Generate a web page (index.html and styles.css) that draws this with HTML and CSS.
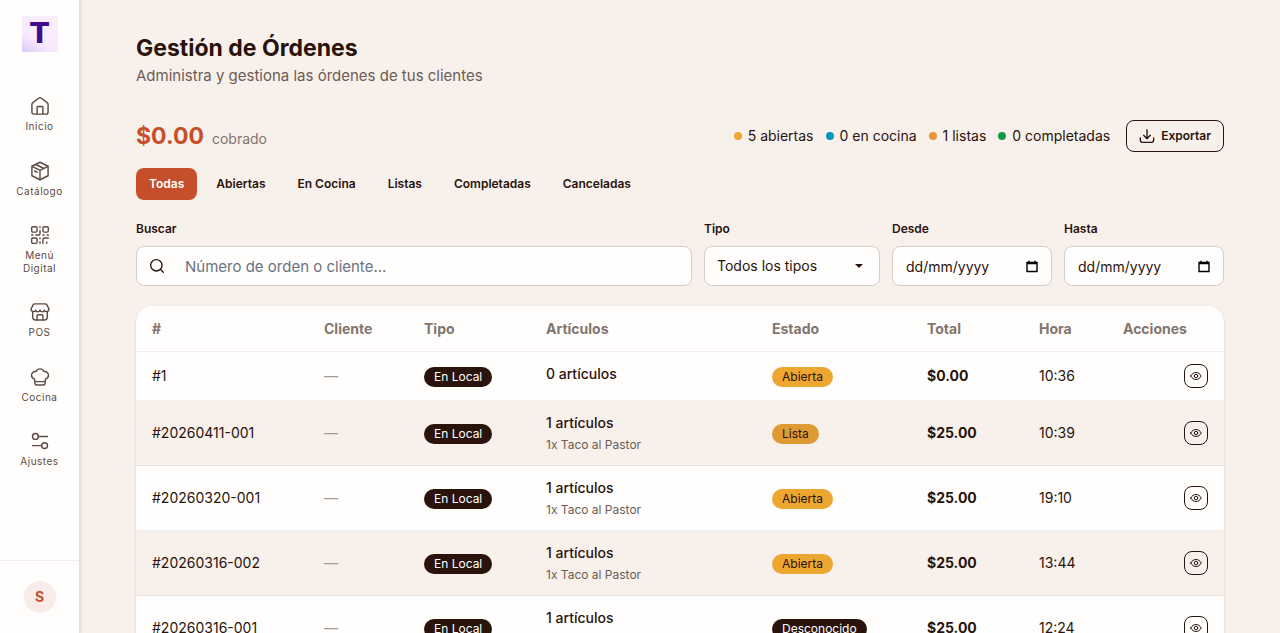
FILE: index.html
```html
<!DOCTYPE html>
<html lang="es">
<head>
  <meta charset="UTF-8">
  <meta name="viewport" content="width=device-width, initial-scale=1">
  <title>Gestión de Órdenes</title>
  <link rel="stylesheet" href="styles.css">
</head>
<body>
  <!-- iconos reutilizables -->
  <svg class="sprite" aria-hidden="true">
    <symbol id="icon-eye" viewBox="0 0 24 24">
      <path d="M1.500 12C4 7.300 7.500 5 12 5s8 2.300 10.500 7c-2.500 4.700-6 7-10.500 7S4 16.700 1.500 12z"/>
      <circle cx="12" cy="12" r="3.500"/>
    </symbol>
    <symbol id="icon-calendar" viewBox="0 0 12 13">
      <path d="M1 2.500h10v9H1z"/>
      <path d="M1 3.500h10M3 .8v2M9 .8v2"/>
    </symbol>
  </svg>

  <aside class="sidebar">
    <a class="logo" href="#">T</a>
    <nav class="nav">
      <a class="nav-item" href="#">
        <svg class="icon" viewBox="0 0 24 24"><path d="M2.300 10.200c0-1 .4-1.700 1.200-2.300l6.700-5.200c1.100-.9 2.500-.9 3.600 0l6.700 5.200c.8.6 1.200 1.300 1.200 2.300v8.900c0 1.700-.9 2.600-2.600 2.600H4.900c-1.700 0-2.600-.9-2.600-2.600z"/><path d="M8.500 21.500v-7.700c0-.8.4-1.200 1.200-1.200h4.600c.8 0 1.200.4 1.200 1.200v7.700"/></svg>
        <span>Inicio</span>
      </a>
      <a class="nav-item" href="#">
        <svg class="icon" viewBox="0 0 24 24"><path d="M12 1.500l9.700 4.800v11.400L12 22.500l-9.700-4.800V6.300z"/><path d="M2.500 6.500L12 11.300l9.500-4.800M12 11.300v11M7 4.200l9.700 4.800M5.500 12l3 1.500"/></svg>
        <span>Catálogo</span>
      </a>
      <a class="nav-item" href="#">
        <svg class="icon" viewBox="0 0 24 24"><rect x="2" y="2" width="6.500" height="6.500" rx="1.500"/><rect x="15.500" y="2" width="6.500" height="6.500" rx="1.500"/><rect x="2" y="15.500" width="6.500" height="6.500" rx="1.500"/><path d="M12 2v1M12 6.500v4c0 1-.5 1.500-1.500 1.500H7M2 12h1.500M12 15.500v1M12 20v2M15.500 12h1.500M20.500 12H22M15.500 22v-4.500c0-1.300.7-2 2-2H22M20 20.500V22"/></svg>
        <span>Menú Digital</span>
      </a>
      <a class="nav-item" href="#">
        <svg class="icon" viewBox="0 0 24 24"><path d="M3.200 11.500V18c0 2.300 1.200 3.500 3.500 3.500h10.600c2.300 0 3.500-1.200 3.500-3.500v-6.500"/><path d="M5.800 2.200h12.400c1 0 1.600.4 2.100 1.300l2.500 5c0 3.500-5 4-5.600 1.200-.8 2.700-4.600 2.700-5.200 0-.6 2.700-4.400 2.700-5.200 0-.6 2.800-5.600 2.300-5.600-1.200l2.500-5c.5-.9 1.100-1.300 2.100-1.300z"/><path d="M8.500 21.300v-4.800c0-.8.4-1.200 1.200-1.200h4.600c.8 0 1.200.4 1.200 1.200v4.800"/></svg>
        <span>POS</span>
      </a>
      <a class="nav-item" href="#">
        <svg class="icon" viewBox="0 0 24 24"><path d="M5.500 14.500C3.300 13.700 1.800 12.200 1.800 10c0-2.800 2.300-4.700 5.200-4.500C8 3.400 9.700 2.200 12 2.200s4 1.200 5 3.300c2.900-.2 5.200 1.700 5.200 4.500 0 2.200-1.500 3.700-3.700 4.500L18 20c-.1 1-.6 1.500-1.500 1.500h-9c-.9 0-1.400-.5-1.500-1.500z"/><path d="M6 17.500h12"/></svg>
        <span>Cocina</span>
      </a>
      <a class="nav-item" href="#">
        <svg class="icon" viewBox="0 0 24 24"><circle cx="6.500" cy="6.500" r="3.500"/><path d="M10 6.500h11"/><circle cx="17.500" cy="17.500" r="3.500"/><path d="M14 17.500H3"/></svg>
        <span>Ajustes</span>
      </a>
    </nav>
    <div class="sidebar-footer">
      <button class="avatar" type="button">S</button>
    </div>
  </aside>

  <main class="main">
    <header class="page-header">
      <h1>Gestión de Órdenes</h1>
      <p>Administra y gestiona las órdenes de tus clientes</p>
    </header>

    <section class="summary">
      <div class="collected"><strong>$0.00</strong><span>cobrado</span></div>
      <div class="summary-right">
        <ul class="counts">
          <li><i class="dot dot-open"></i>5 abiertas</li>
          <li><i class="dot dot-kitchen"></i>0 en cocina</li>
          <li><i class="dot dot-ready"></i>1 listas</li>
          <li><i class="dot dot-done"></i>0 completadas</li>
        </ul>
        <button class="btn btn-outline" type="button">
          <svg class="icon-sm" viewBox="0 0 24 24"><path d="M12 2.500v13M7 11l5 5 5-5M2 15v3c0 2.300 1.200 3.500 3.500 3.500h13c2.300 0 3.500-1.200 3.500-3.500v-3"/></svg>
          Exportar
        </button>
      </div>
    </section>

    <div class="tabs">
      <button class="btn active" type="button">Todas</button>
      <button class="btn" type="button">Abiertas</button>
      <button class="btn" type="button">En Cocina</button>
      <button class="btn" type="button">Listas</button>
      <button class="btn" type="button">Completadas</button>
      <button class="btn" type="button">Canceladas</button>
    </div>

    <form class="filters">
      <div class="field field-search">
        <label for="search">Buscar</label>
        <div class="control">
          <svg class="icon-sm" viewBox="0 0 24 24"><circle cx="11" cy="11" r="8.500"/><path d="M17.300 17.300L21.500 21.500"/></svg>
          <input id="search" type="text" placeholder="Número de orden o cliente...">
        </div>
      </div>
      <div class="field field-type">
        <label for="type">Tipo</label>
        <div class="control">
          <select id="type">
            <option>Todos los tipos</option>
            <option>En Local</option>
          </select>
          <svg class="caret" viewBox="0 0 8 4"><path d="M0 0h8L4 4z"/></svg>
        </div>
      </div>
      <div class="field field-date">
        <label for="from">Desde</label>
        <div class="control">
          <input id="from" type="text" inputmode="numeric" placeholder="dd/mm/yyyy">
          <svg class="calendar"><use href="#icon-calendar"/></svg>
        </div>
      </div>
      <div class="field field-date">
        <label for="to">Hasta</label>
        <div class="control">
          <input id="to" type="text" inputmode="numeric" placeholder="dd/mm/yyyy">
          <svg class="calendar"><use href="#icon-calendar"/></svg>
        </div>
      </div>
    </form>

    <div class="card">
      <table class="orders">
        <colgroup>
          <col class="col-id"><col class="col-client"><col class="col-type"><col class="col-items">
          <col class="col-status"><col class="col-total"><col class="col-time"><col class="col-actions">
        </colgroup>
        <thead>
          <tr><th>#</th><th>Cliente</th><th>Tipo</th><th>Artículos</th><th>Estado</th><th>Total</th><th>Hora</th><th>Acciones</th></tr>
        </thead>
        <tbody>
          <tr>
            <td>#1</td>
            <td class="empty">—</td>
            <td><span class="badge badge-dark">En Local</span></td>
            <td><div class="items">0 artículos</div></td>
            <td><span class="badge badge-open">Abierta</span></td>
            <td class="total">$0.00</td>
            <td>10:36</td>
            <td class="actions"><button class="btn-view" type="button" aria-label="Ver"><svg><use href="#icon-eye"/></svg></button></td>
          </tr>
          <tr>
            <td>#20260411-001</td>
            <td class="empty">—</td>
            <td><span class="badge badge-dark">En Local</span></td>
            <td><div class="items">1 artículos</div><div class="detail">1x Taco al Pastor</div></td>
            <td><span class="badge badge-ready">Lista</span></td>
            <td class="total">$25.00</td>
            <td>10:39</td>
            <td class="actions"><button class="btn-view" type="button" aria-label="Ver"><svg><use href="#icon-eye"/></svg></button></td>
          </tr>
          <tr>
            <td>#20260320-001</td>
            <td class="empty">—</td>
            <td><span class="badge badge-dark">En Local</span></td>
            <td><div class="items">1 artículos</div><div class="detail">1x Taco al Pastor</div></td>
            <td><span class="badge badge-open">Abierta</span></td>
            <td class="total">$25.00</td>
            <td>19:10</td>
            <td class="actions"><button class="btn-view" type="button" aria-label="Ver"><svg><use href="#icon-eye"/></svg></button></td>
          </tr>
          <tr>
            <td>#20260316-002</td>
            <td class="empty">—</td>
            <td><span class="badge badge-dark">En Local</span></td>
            <td><div class="items">1 artículos</div><div class="detail">1x Taco al Pastor</div></td>
            <td><span class="badge badge-open">Abierta</span></td>
            <td class="total">$25.00</td>
            <td>13:44</td>
            <td class="actions"><button class="btn-view" type="button" aria-label="Ver"><svg><use href="#icon-eye"/></svg></button></td>
          </tr>
          <tr>
            <td>#20260316-001</td>
            <td class="empty">—</td>
            <td><span class="badge badge-dark">En Local</span></td>
            <td><div class="items">1 artículos</div><div class="detail">1x Taco al Pastor</div></td>
            <td><span class="badge badge-dark">Desconocido</span></td>
            <td class="total">$25.00</td>
            <td>12:24</td>
            <td class="actions"><button class="btn-view" type="button" aria-label="Ver"><svg><use href="#icon-eye"/></svg></button></td>
          </tr>
        </tbody>
      </table>
    </div>
  </main>
</body>
</html>
```
FILE: styles.css
```css
:root {
  --bg: #f7f0eb;
  --surface: #fffefd;
  --text: #29130b;
  --primary: #c54f2a;
  --line: rgba(41, 19, 11, 0.07);
}

* {
  box-sizing: border-box;
}

html {
  scrollbar-width: none;
}

body {
  margin: 0;
  display: flex;
  align-items: flex-start;
  background: var(--bg);
  color: var(--text);
  font-family: Inter, "Liberation Sans", sans-serif;
  font-size: 14px;
  line-height: 20px;
}

button, input, select {
  font: inherit;
  color: inherit;
}

svg {
  fill: none;
  stroke: currentColor;
  stroke-width: 1.7;
  stroke-linecap: round;
  stroke-linejoin: round;
}

.sprite {
  position: absolute;
  width: 0;
  height: 0;
}

/* barra lateral */
.sidebar {
  position: sticky;
  top: 0;
  display: flex;
  flex-direction: column;
  flex: none;
  width: 80px;
  height: 100vh;
  background: var(--surface);
  border-right: 1px solid #e6dfdb;
  box-shadow: 1px 0 3px rgba(41, 19, 11, 0.1);
}

.logo {
  align-self: center;
  display: flex;
  align-items: center;
  justify-content: center;
  width: 36px;
  height: 36px;
  margin: 16px 0 32px;
  background: linear-gradient(30deg, #d9c9fb, #f8eafd 35%, #faeefc);
  color: #430c8c;
  font-family: "DejaVu Sans", sans-serif;
  font-size: 28px;
  font-weight: 700;
  text-decoration: none;
}

.nav {
  display: flex;
  flex-direction: column;
  flex: 1;
  gap: 4px;
  padding: 0 8px;
}

.nav-item {
  display: flex;
  flex-direction: column;
  align-items: center;
  gap: 4px;
  padding: 12px 4px;
  color: #5c4a43;
  font-size: 10px;
  line-height: 1.25;
  letter-spacing: 0.05em;
  text-align: center;
  text-decoration: none;
}

.icon {
  width: 20px;
  height: 20px;
}

.icon-sm {
  width: 16px;
  height: 16px;
  stroke-width: 2;
}

.sidebar-footer {
  display: flex;
  justify-content: center;
  padding: 20px 0;
  border-top: 1px solid var(--line);
}

.avatar {
  width: 32px;
  height: 32px;
  padding: 0;
  border: 0;
  border-radius: 50%;
  background: #f9ece8;
  color: var(--primary);
  font-weight: 700;
}

/* contenido */
.main {
  flex: 1;
  min-width: 0;
  padding: 32px 56px;
}

.page-header {
  margin-bottom: 32px;
}

h1 {
  margin: 0;
  font-size: 23px;
  font-weight: 700;
  line-height: 32px;
}

.page-header p {
  margin: 0;
  color: #6d5c55;
  font-size: 15px;
  line-height: 24px;
}

.summary {
  display: flex;
  align-items: center;
  justify-content: space-between;
  margin-bottom: 16px;
}

.collected {
  display: flex;
  align-items: baseline;
  gap: 8px;
  color: #83756f;
}

.collected strong {
  color: var(--primary);
  font-size: 23px;
  line-height: 32px;
}

.summary-right {
  display: flex;
  align-items: center;
  gap: 16px;
}

.counts {
  display: flex;
  gap: 12px;
  margin: 0;
  padding: 0;
  list-style: none;
}

.counts li {
  display: flex;
  align-items: center;
  gap: 6px;
}

.dot {
  width: 8px;
  height: 8px;
  border-radius: 50%;
}

.dot-open { background: #eda62f; }
.dot-kitchen { background: #0096be; }
.dot-ready { background: #e09a35; }
.dot-done { background: #119a4a; }

.btn {
  display: inline-flex;
  align-items: center;
  gap: 6px;
  height: 32px;
  padding: 0 12px;
  border: 1px solid transparent;
  border-radius: 8px;
  background: none;
  font-size: 12px;
  font-weight: 600;
  cursor: pointer;
}

.btn-outline {
  border-color: var(--text);
}

.btn.active {
  background: var(--primary);
  color: #fff;
}

.tabs {
  display: flex;
  gap: 6px;
  margin-bottom: 20px;
}

/* filtros */
.filters {
  display: flex;
  gap: 12px;
  margin-bottom: 20px;
}

.field label {
  display: block;
  margin-bottom: 8px;
  font-size: 12px;
  font-weight: 600;
  line-height: 18px;
}

.field-search { flex: 1; }
.field-type { width: 176px; }
.field-date { width: 160px; }

.control {
  display: flex;
  align-items: center;
  height: 40px;
  padding: 0 12px;
  border: 1px solid #d5cfcc;
  border-radius: 8px;
  background: var(--surface);
}

.control input,
.control select {
  flex: 1;
  min-width: 0;
  height: 100%;
  padding: 0;
  border: 0;
  outline: 0;
  background: none;
  appearance: none;
}

.field-search .control {
  gap: 20px;
}

.field-search input {
  font-size: 15px;
}

.control input::placeholder {
  color: var(--text);
}

.field-search input::placeholder {
  color: #6b7280;
}

.caret {
  width: 8px;
  height: 4px;
  margin-right: 4px;
  fill: currentColor;
  stroke: none;
}

.calendar {
  width: 12px;
  height: 13px;
  color: #000;
  stroke-width: 1.4;
  stroke-linecap: butt;
  stroke-linejoin: miter;
}

.field-date .control {
  padding: 0 13px;
}

/* tabla de órdenes */
.card {
  overflow: hidden;
  border-radius: 16px;
  background: var(--surface);
  box-shadow: 0 1px 3px rgba(41, 19, 11, 0.12);
}

.orders {
  width: 100%;
  table-layout: fixed;
  border-collapse: separate;
  border-spacing: 0;
}

.col-id { width: 172px; }
.col-client { width: 100px; }
.col-type { width: 122px; }
.col-items { width: 226px; }
.col-status { width: 155px; }
.col-total { width: 112px; }
.col-time { width: 84px; }
.col-actions { width: 117px; }

.orders th,
.orders td {
  padding: 12px 16px;
  border-bottom: 1px solid var(--line);
  text-align: left;
  vertical-align: middle;
}

.orders th {
  color: #83756f;
  font-weight: 700;
  line-height: 21px;
}

.orders tbody tr {
  height: 49px;
}

.orders tbody tr:nth-child(even) {
  background: var(--bg);
}

.orders .empty {
  color: #a59c98;
}

.items {
  margin-bottom: 4px;
  font-weight: 500;
}

.detail {
  color: #6d5c55;
  font-size: 12px;
  line-height: 16px;
}

.total {
  font-weight: 700;
}

.badge {
  display: inline-flex;
  align-items: center;
  height: 20px;
  padding: 0 10px;
  border-radius: 10px;
  font-size: 12px;
  vertical-align: middle;
}

.badge-dark {
  background: var(--text);
  color: #fff;
}

.badge-open { background: #eda62f; }
.badge-ready { background: #e09a35; }

.orders .actions {
  text-align: right;
}

.btn-view {
  display: inline-flex;
  align-items: center;
  justify-content: center;
  width: 24px;
  height: 24px;
  padding: 0;
  border: 1px solid var(--text);
  border-radius: 8px;
  background: none;
  vertical-align: middle;
  cursor: pointer;
}

.btn-view svg {
  width: 12px;
  height: 12px;
  stroke-width: 2;
}
```
